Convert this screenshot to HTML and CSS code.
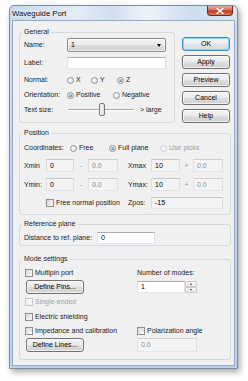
FILE: index.html
```html
<!DOCTYPE html>
<html lang="en">
<head>
<meta charset="utf-8">
<title>Waveguide Port</title>
<link rel="stylesheet" href="styles.css">
</head>
<body>
<div class="window">
  <div class="titlebar">
    <span class="title">Waveguide Port</span>
    <div class="close"><svg width="8" height="6" viewBox="0 0 8 6"><path d="M1 0.5 L7 5.5 M7 0.5 L1 5.5" stroke="#fff" stroke-width="1.6" stroke-linecap="round"/></svg></div>
  </div>
  <div class="client">
    <div class="top">
      <fieldset class="group general">
        <legend>General</legend>
        <div class="frow r-name">
          <span class="flabel">Name:</span>
          <div class="combo"><span>1</span><span class="combo-arrow"></span></div>
        </div>
        <div class="frow r-label">
          <span class="flabel">Label:</span>
          <div class="edit w99"></div>
        </div>
        <div class="frow r-normal">
          <span class="flabel">Normal:</span>
          <span class="opt o-x"><span class="radio"></span>X</span>
          <span class="opt o-y"><span class="radio"></span>Y</span>
          <span class="opt"><span class="radio on"></span>Z</span>
        </div>
        <div class="frow r-orient">
          <span class="flabel">Orientation:</span>
          <span class="opt o-pos"><span class="radio on"></span>Positive</span>
          <span class="opt"><span class="radio"></span>Negative</span>
        </div>
        <div class="frow r-size">
          <span class="flabel">Text size:</span>
          <div class="slider"><span class="track"></span><span class="thumb"></span></div>
          <span class="large">&gt; large</span>
        </div>
      </fieldset>
      <div class="buttons">
        <button class="btn default">OK</button>
        <button class="btn">Apply</button>
        <button class="btn">Preview</button>
        <button class="btn">Cancel</button>
        <button class="btn">Help</button>
      </div>
    </div>

    <fieldset class="group position">
      <legend>Position</legend>
      <div class="frow r-coords">
        <span class="clabel">Coordinates:</span>
        <span class="opt o-free"><span class="radio"></span>Free</span>
        <span class="opt o-full"><span class="radio on"></span>Full plane</span>
        <span class="opt disabled"><span class="radio off"></span>Use picks</span>
      </div>
      <div class="coord-grid">
        <span>Xmin</span>
        <div class="edit ro">0</div>
        <span class="sep">-</span>
        <div class="edit dis">0.0</div>
        <span></span>
        <span>Xmax</span>
        <div class="edit ro">10</div>
        <span class="sep">+</span>
        <div class="edit dis">0.0</div>

        <span>Ymin:</span>
        <div class="edit ro">0</div>
        <span class="sep">-</span>
        <div class="edit dis">0.0</div>
        <span></span>
        <span>Ymax:</span>
        <div class="edit ro">10</div>
        <span class="sep">+</span>
        <div class="edit dis">0.0</div>

        <span class="opt free-normal"><span class="check"></span>Free normal position</span>
        <span>Zpos:</span>
        <div class="edit ro zpos">-15</div>
      </div>
    </fieldset>

    <fieldset class="group reference">
      <legend>Reference plane</legend>
      <div class="frow r-dist">
        <span class="dlabel">Distance to ref. plane:</span>
        <div class="edit w58">0</div>
      </div>
    </fieldset>

    <fieldset class="group mode">
      <legend>Mode settings</legend>
      <div class="mode-grid">
        <span class="opt ml1"><span class="check"></span>Multipin port</span>
        <span>Number of modes:</span>

        <button class="btn small">Define Pins...</button>
        <div class="spin">
          <div class="edit spin-edit">1</div>
          <div class="spin-btns"><span class="sb"><span class="up"></span></span><span class="sb"><span class="down"></span></span></div>
        </div>

        <span class="opt ml1 disabled full"><span class="check off"></span>Single-ended</span>
        <span class="opt ml1 full"><span class="check"></span>Electric shielding</span>

        <span class="opt ml1"><span class="check"></span>Impedance and calibration</span>
        <span class="opt"><span class="check"></span>Polarization angle</span>

        <button class="btn small">Define Lines...</button>
        <div class="edit dis w60 h14">0.0</div>
      </div>
    </fieldset>
  </div>
</div>
</body>
</html>
```

FILE: styles.css
```css
* { box-sizing: border-box; }
html, body { margin: 0; padding: 0; background: #fff; }
body {
  width: 248px;
  height: 381px;
  overflow: hidden;
  font-family: "Liberation Sans", Arial, sans-serif;
  font-size: 7px;
  line-height: 8px;
  color: #1a1a1a;
}

.window {
  margin: 5px 0 0 9px;
  width: 229px;
  height: 364px;
  border: 1px solid #7d8da0;
  border-radius: 5px 5px 0 0;
  padding: 0 2px 2px 2px;
  display: flex;
  flex-direction: column;
  background:
    linear-gradient(to right, #c9d9ec 0%, #e3ecf6 30%, #d0def0 45%, #eef3f9 60%, #cddcef 80%, #d9e5f2 100%) top / 100% 15px no-repeat,
    linear-gradient(#cfdef0, #c1d5ec 50%, #bcd2ea);
  box-shadow: 2px 3px 6px rgba(0, 0, 0, 0.35);
}

.titlebar {
  height: 14px;
  display: flex;
  align-items: center;
  flex: none;
}
.title {
  font-size: 7.7px;
  color: #000;
  text-shadow: 0 0 3px #fff, 0 0 3px #fff;
  margin-top: 1px;
}
.close {
  margin-left: auto;
  margin-right: 2px;
  align-self: flex-start;
  width: 26px;
  height: 10px;
  border: 1px solid #6b2a1b;
  border-top: none;
  border-radius: 0 0 4px 4px;
  background: linear-gradient(#e9b0a2, #d8755c 40%, #c43f20 52%, #cf5533 80%, #e08a70);
  display: flex;
  align-items: center;
  justify-content: center;
}

.client {
  flex: none;
  height: 346px;
  border: 1px solid #94aac4;
  background: #f0f0f0;
  padding: 7px 3px 0 6px;
  display: flex;
  flex-direction: column;
}

.top { display: flex; align-items: flex-start; }

.group {
  margin: 0;
  min-width: 0;
  border: 1px solid #d3dbe2;
  border-radius: 3px;
  padding: 0 4px;
}
.group legend {
  font-size: 7px;
  line-height: 8px;
  height: 8px;
  padding: 0 2px;
  margin-left: -2px;
}

.general { width: 156px; padding-top: 2px; padding-bottom: 6px; }
.position { width: 212px; margin-top: 6px; padding-top: 6px; padding-bottom: 5px; }
.reference { width: 212px; margin-top: 5px; padding-top: 4px; padding-bottom: 1px; }
.mode { width: 212px; margin-top: 9px; padding-top: 3px; padding-bottom: 7px; }

.buttons {
  margin-left: 7px;
  margin-top: 9px;
  width: 48px;
  display: flex;
  flex-direction: column;
  gap: 4px;
}
.btn {
  font: inherit;
  color: #000;
  padding: 0;
  margin: 0;
  height: 14px;
  border: 1px solid #707070;
  border-radius: 3px;
  background: linear-gradient(#f3f3f3, #ebebeb 45%, #dddddd 52%, #cfcfcf);
  box-shadow: inset 0 0 0 1px rgba(255, 255, 255, 0.7);
  display: flex;
  align-items: center;
  justify-content: center;
}
.btn.default {
  border-color: #3c8cc4;
  box-shadow: inset 0 0 0 1px #86d8fa;
  background: linear-gradient(#f4f7f9, #eceff1 45%, #e0e4e7 52%, #d6dadd);
}
.btn.small { width: 58px; margin-left: 2px; }

.frow { display: flex; align-items: center; }
.flabel { width: 43px; flex: none; }
.r-name { height: 14px; }
.r-label { height: 12px; margin-top: 5px; }
.r-normal { height: 10px; margin-top: 6px; }
.r-orient { height: 10px; margin-top: 5px; }
.r-size { height: 13px; margin-top: 3px; }

.opt { display: flex; align-items: center; gap: 2px; white-space: nowrap; }
.r-normal .opt:first-of-type, .r-orient .opt:first-of-type { margin-left: 1px; }
.o-x { width: 24px; }
.o-y { width: 26px; }
.o-pos { width: 46px; }
.disabled { color: #a0a0a0; }

.radio {
  width: 7px;
  height: 7px;
  flex: none;
  border-radius: 50%;
  border: 1px solid #8d9297;
  background: radial-gradient(circle at 40% 40%, #ffffff, #d6d8da);
  position: relative;
}
.radio.on::after {
  content: "";
  position: absolute;
  left: 1px;
  top: 1px;
  width: 3px;
  height: 3px;
  border-radius: 50%;
  background: radial-gradient(circle at 35% 35%, #9ad8f6, #1b5f9a);
}
.radio.off { border-color: #c6c8ca; background: #f4f4f4; }

.check {
  width: 8px;
  height: 8px;
  flex: none;
  border: 1px solid #8e8f8f;
  background: linear-gradient(135deg, #d8d8d8, #f8f8f8);
}
.check.off { border-color: #c7c7c7; background: #f3f3f3; }

.combo {
  width: 99px;
  height: 14px;
  border: 1px solid #8a8a8a;
  border-radius: 2px;
  background: linear-gradient(#f4f4f4, #ebebeb 45%, #dedede 52%, #d2d2d2);
  box-shadow: inset 0 0 0 1px rgba(255, 255, 255, 0.6);
  display: flex;
  align-items: center;
  justify-content: space-between;
  padding: 0 4px 0 3px;
  color: #000;
}
.combo-arrow {
  width: 0;
  height: 0;
  border-left: 2.5px solid transparent;
  border-right: 2.5px solid transparent;
  border-top: 3px solid #000;
}

.edit {
  height: 13px;
  border: 1px solid;
  border-color: #abadb3 #dbdfe6 #e3e9ef #e2e3ea;
  background: #fff;
  padding-left: 3px;
  display: flex;
  align-items: center;
  color: #000;
}
.edit.ro { background: #f3f3f3; border-color: #c3c5c9 #dcdde0 #e4e5e8 #dcdde0; }
.edit.dis { background: #f3f3f3; border-color: #cfd0d2 #dedfe1 #e5e6e8 #dedfe1; color: #8a8a8a; }
.w99 { width: 99px; height: 12px; }
.w58 { width: 58px; height: 12px; }
.w60 { width: 60px; }
.h14 { height: 14px; }

.slider { width: 67px; height: 13px; position: relative; flex: none; margin-right: 6px; }
.track {
  position: absolute;
  left: 1px;
  right: 0;
  top: 6px;
  height: 2px;
  border-top: 1px solid #a8a8a8;
  border-bottom: 1px solid #fff;
}
.thumb {
  position: absolute;
  left: 32px;
  top: 0;
  width: 6px;
  height: 13px;
  border: 1px solid #7a7a7a;
  border-radius: 2px;
  background: linear-gradient(to right, #f4f4f4, #dcdcdc);
}

.r-coords { height: 10px; }
.clabel { width: 46px; flex: none; }
.o-free { width: 39px; }
.o-full { width: 51px; }

.coord-grid {
  margin-top: 6px;
  display: grid;
  grid-template-columns: 22px 28px 14px 30px 10px 23px 29px 13px 30px;
  grid-template-rows: 13px 13px 12px;
  row-gap: 6px;
  align-items: center;
}
.sep { text-align: center; color: #9a9a9a; }
.free-normal { grid-column: 2 / 6; }
.zpos { grid-column: 7 / 10; height: 12px; }

.r-dist { height: 12px; }
.dlabel { width: 73px; flex: none; }

.mode-grid {
  display: grid;
  grid-template-columns: 113px 1fr;
  grid-template-rows: 13px 15px 16px 14px 14px 14px;
  align-items: center;
}
.ml1 { margin-left: 1px; }
.full { grid-column: 1 / 3; }

.spin { display: flex; width: 60px; height: 12px; }
.spin-edit { width: 48px; height: 12px; }
.spin-btns { width: 12px; display: flex; flex-direction: column; }
.sb {
  flex: 1;
  border: 1px solid #c8cacd;
  border-radius: 1px;
  background: linear-gradient(#f6f6f6, #e6e6e6);
  display: flex;
  align-items: center;
  justify-content: center;
}
.up { width: 0; height: 0; border-left: 1.5px solid transparent; border-right: 1.5px solid transparent; border-bottom: 2px solid #444; }
.down { width: 0; height: 0; border-left: 1.5px solid transparent; border-right: 1.5px solid transparent; border-top: 2px solid #444; }
```
